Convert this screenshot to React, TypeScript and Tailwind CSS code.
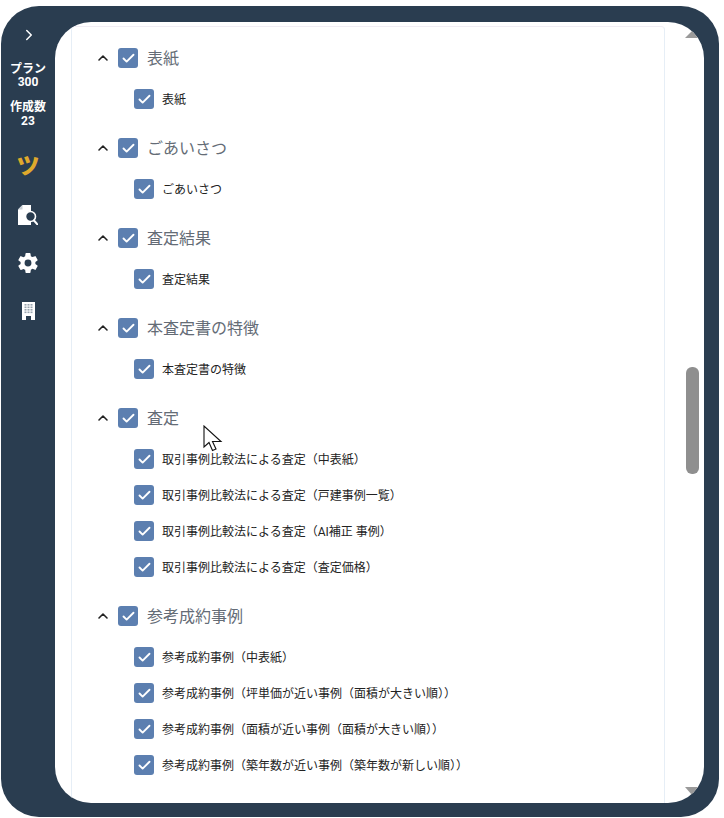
import { Check, ChevronRight, ChevronUp } from "lucide-react";
import { IoSettingsSharp } from "react-icons/io5";

const sections = [
  { title: "表紙", items: ["表紙"] },
  { title: "ごあいさつ", items: ["ごあいさつ"] },
  { title: "査定結果", items: ["査定結果"] },
  { title: "本査定書の特徴", items: ["本査定書の特徴"] },
  {
    title: "査定",
    items: [
      "取引事例比較法による査定（中表紙）",
      "取引事例比較法による査定（戸建事例一覧）",
      "取引事例比較法による査定（AI補正 事例）",
      "取引事例比較法による査定（査定価格）",
    ],
  },
  {
    title: "参考成約事例",
    items: [
      "参考成約事例（中表紙）",
      "参考成約事例（坪単価が近い事例（面積が大きい順））",
      "参考成約事例（面積が近い事例（面積が大きい順））",
      "参考成約事例（築年数が近い事例（築年数が新しい順））",
    ],
  },
];

function Box() {
  return (
    <span className="flex h-5 w-5 shrink-0 items-center justify-center rounded-[3px] bg-[#5c7fb0]">
      <Check size={15} strokeWidth={3} className="text-white" />
    </span>
  );
}

function DocSearchIcon() {
  return (
    <svg width="20" height="20" viewBox="0 0 20 20" className="block">
      <path d="M4.500 0H13v20H0V4.500z" fill="#fff" />
      <path d="M4.500 0v4.500H0z" fill="#c9d0d6" />
      <circle cx="12.500" cy="11.500" r="5" fill="#2a3d50" stroke="#fff" strokeWidth="1.600" />
      <path d="M16 15.500 19.500 19.500" stroke="#fff" strokeWidth="2" strokeLinecap="round" />
    </svg>
  );
}

function BuildingIcon() {
  return (
    <svg width="13" height="18" viewBox="0 0 13 18" className="block">
      <path d="M0 0h13v18H9v-4H4v4H0z" fill="#fff" />
      {[2, 4.500, 7, 9.500].map((y) =>
        [2.500, 5.500, 8.500].map((x) => <rect key={`${x}-${y}`} x={x} y={y} width="2" height="1.600" fill="#9aa5af" />),
      )}
    </svg>
  );
}

function Cursor() {
  return (
    <svg width="20" height="30" viewBox="0 0 20 30" className="absolute left-[148px] top-[403px]">
      <path
        d="M1 1v21l5-4.500 3.500 8 3.500-1.500-3.500-7.500H18z"
        fill="#fff"
        stroke="#111"
        strokeWidth="1.100"
        strokeLinejoin="miter"
      />
    </svg>
  );
}

export default function App() {
  return (
    <div className="h-[818px] w-[724px] overflow-hidden bg-white font-['Roboto','Noto_Sans_CJK_JP',sans-serif]">
      <div className="ml-[1px] mt-[6px] flex h-[811px] w-[718px] rounded-[38px] bg-[#2a3d50] pb-[14px] pr-[15px] pt-[16px]">
        <aside className="flex w-[54px] shrink-0 flex-col items-center text-white">
          <ChevronRight size={18} strokeWidth={2} className="ml-[1px] mt-[4px]" />
          <div className="mt-[19px] text-center text-[12px] font-bold leading-[13px]">
            <p>プラン</p>
            <p>300</p>
          </div>
          <div className="mt-[11px] text-center text-[12px] font-bold leading-[14px]">
            <p>作成数</p>
            <p>23</p>
          </div>
          <span className="mt-[21px] h-[36px] text-[23px] font-black leading-[36px] text-[#dfa92c]">ツ</span>
          <span className="mt-[20px]">
            <DocSearchIcon />
          </span>
          <IoSettingsSharp size={22} className="mt-[27px]" />
          <span className="mt-[28px]">
            <BuildingIcon />
          </span>
        </aside>
        <main className="relative min-w-0 flex-1 overflow-hidden rounded-[36px] bg-white pl-[16px] pt-[4px]">
          <div className="h-[790px] w-[594px] rounded-t-[4px] border-x border-t border-x-[#e6eef6] border-t-[#f1edf4] pl-[22px] pt-[21px]">
            <div className="flex flex-col gap-[29px]">
              {sections.map((section) => (
                <section key={section.title} className="flex flex-col gap-[21px]">
                  <div className="flex h-5 items-center gap-[8px]">
                    <ChevronUp size={16} strokeWidth={2.4} className="ml-[1px] mr-[-1px] text-[#222]" />
                    <Box />
                    <span className="mt-[2px] pl-[1px] text-[16px] leading-5 text-[#646c76]">{section.title}</span>
                  </div>
                  <div className="ml-[40px] flex flex-col gap-[16px]">
                    {section.items.map((item) => (
                      <div key={item} className="flex h-5 items-center gap-[8px]">
                        <Box />
                        <span className="mt-[2px] text-[12px] leading-5 text-[#222]">{item}</span>
                      </div>
                    ))}
                  </div>
                </section>
              ))}
            </div>
          </div>
          <span className="absolute right-[5px] top-[9px] h-0 w-0 border-x-[7px] border-b-[7px] border-x-transparent border-b-[#9a9a9a]" />
          <span className="absolute bottom-[8px] right-[5px] h-0 w-0 border-x-[7px] border-t-[8px] border-x-transparent border-t-[#9a9a9a]" />
          <span className="absolute right-[5px] top-[345px] h-[107px] w-[13px] rounded-[6px] bg-[#8f8f8f]" />
          <Cursor />
        </main>
      </div>
    </div>
  );
}
